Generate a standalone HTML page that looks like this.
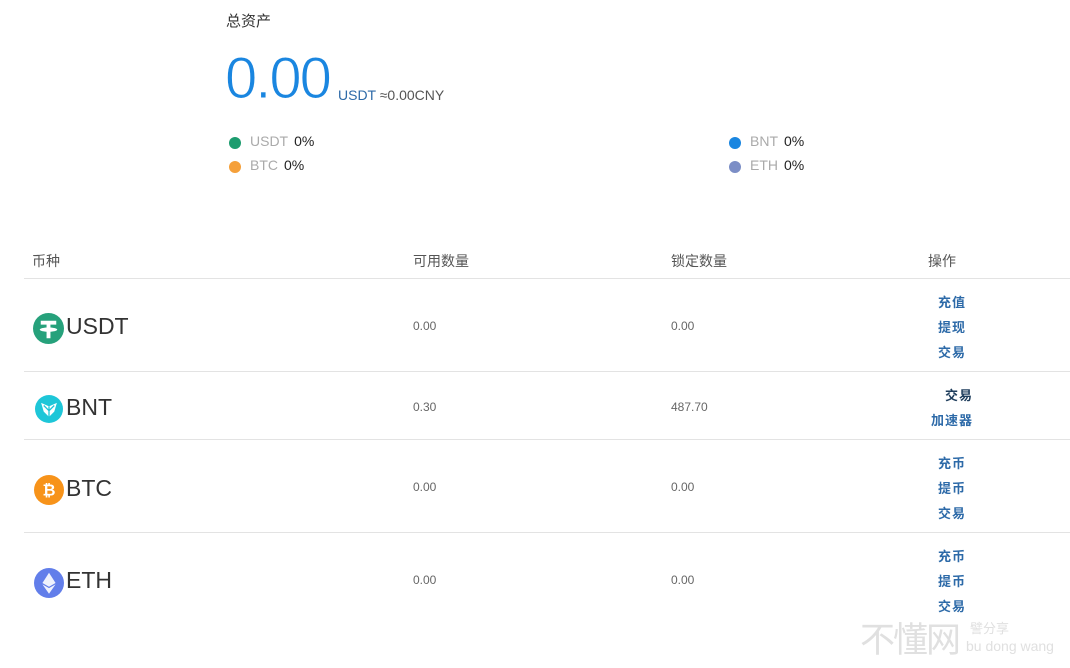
<!DOCTYPE html>
<html><head><meta charset="utf-8"><style>
*{margin:0;padding:0;box-sizing:border-box}
body{width:1070px;height:668px;background:#fff;font-family:"Liberation Sans","Noto Sans CJK SC",sans-serif;position:relative;overflow:hidden;color:#333}
.a{position:absolute;white-space:nowrap}
.dot{position:absolute;width:12px;height:12px;border-radius:50%}
.leg{font-size:14px;color:#aaa}
.leg b{font-weight:normal;color:#222;margin-left:6px}
.hd{font-size:14px;color:#555}
.line{position:absolute;left:24px;width:1046px;height:1px;background:#e3e3e3}
.num{font-size:12px;color:#666}
.coin{font-size:23px;color:#333}
.op{font-size:13px;color:#2d6aa8;font-weight:bold;letter-spacing:1px}
</style></head><body>
<div class="a" style="left:226px;top:10px;font-size:15px;color:#333">总资产</div>
<div class="a" style="left:225px;top:47px;font-size:58px;color:#1a86e0;line-height:64px;letter-spacing:-2px;-webkit-text-stroke:1px #fff">0.00</div>
<div class="a" style="left:338px;top:87px;font-size:14px;color:#2d6aa8">USDT <span style="color:#555">≈0.00CNY</span></div>

<div class="dot" style="left:229px;top:137px;background:#1d9c6f"></div>
<div class="a leg" style="left:250px;top:133px">USDT<b>0%</b></div>
<div class="dot" style="left:229px;top:161px;background:#f5a03a"></div>
<div class="a leg" style="left:250px;top:157px">BTC<b>0%</b></div>
<div class="dot" style="left:729px;top:137px;background:#1a86e0"></div>
<div class="a leg" style="left:750px;top:133px">BNT<b>0%</b></div>
<div class="dot" style="left:729px;top:161px;background:#7c8ec6"></div>
<div class="a leg" style="left:750px;top:157px">ETH<b>0%</b></div>

<div class="a hd" style="left:32px;top:251px">币种</div>
<div class="a hd" style="left:413px;top:251px">可用数量</div>
<div class="a hd" style="left:671px;top:251px">锁定数量</div>
<div class="a hd" style="left:928px;top:251px">操作</div>
<div class="line" style="top:278px"></div>
<div class="line" style="top:371px"></div>
<div class="line" style="top:439px"></div>
<div class="line" style="top:532px"></div>

<svg class="a" style="left:33px;top:313px" width="31" height="31" viewBox="0 0 32 32"><circle cx="16" cy="16" r="16" fill="#26a17b"/><path d="M8 8h16v4h-6v3c4 .3 7 1.2 7 2.2s-3 1.9-7 2.2V26h-4v-6.6c-4-.3-7-1.2-7-2.2s3-1.9 7-2.2V12H8z" fill="#fff"/></svg>
<div class="a coin" style="left:66px;top:313px">USDT</div>
<div class="a num" style="left:413px;top:319px">0.00</div>
<div class="a num" style="left:671px;top:319px">0.00</div>
<div class="a op" style="left:938px;top:292px">充值</div>
<div class="a op" style="left:938px;top:317px">提现</div>
<div class="a op" style="left:938px;top:342px">交易</div>

<svg class="a" style="left:35px;top:395px" width="28" height="28" viewBox="0 0 32 32"><circle cx="16" cy="16" r="16" fill="#1ec6d8"/><path d="M7 9l9 4 9-4-3 10-6 6-6-6z" fill="#fff"/><path d="M16 13v12M10 12l6 6 6-6" stroke="#1ec6d8" stroke-width="1.5" fill="none"/></svg>
<div class="a coin" style="left:66px;top:394px">BNT</div>
<div class="a num" style="left:413px;top:400px">0.30</div>
<div class="a num" style="left:671px;top:400px">487.70</div>
<div class="a op" style="left:945px;top:385px;color:#1e3d5c">交易</div>
<div class="a op" style="left:931px;top:410px">加速器</div>

<svg class="a" style="left:34px;top:475px" width="30" height="30" viewBox="0 0 32 32"><circle cx="16" cy="16" r="16" fill="#f7931a"/><text x="16" y="22" font-size="17" font-weight="bold" fill="#fff" text-anchor="middle" font-family="Liberation Sans">₿</text></svg>
<div class="a coin" style="left:66px;top:475px">BTC</div>
<div class="a num" style="left:413px;top:480px">0.00</div>
<div class="a num" style="left:671px;top:480px">0.00</div>
<div class="a op" style="left:938px;top:453px">充币</div>
<div class="a op" style="left:938px;top:478px">提币</div>
<div class="a op" style="left:938px;top:503px">交易</div>

<svg class="a" style="left:34px;top:568px" width="30" height="30" viewBox="0 0 32 32"><circle cx="16" cy="16" r="16" fill="#627eea"/><path d="M16 5l7 11-7 4-7-4z" fill="#fff" opacity=".9"/><path d="M16 21.5l7-4-7 10-7-10z" fill="#fff" opacity=".9"/></svg>
<div class="a coin" style="left:66px;top:567px">ETH</div>
<div class="a num" style="left:413px;top:573px">0.00</div>
<div class="a num" style="left:671px;top:573px">0.00</div>
<div class="a op" style="left:938px;top:546px">充币</div>
<div class="a op" style="left:938px;top:571px">提币</div>
<div class="a op" style="left:938px;top:596px">交易</div>

<div class="a" style="left:860px;top:612px;font-size:35px;color:#e0e0e0;letter-spacing:-2px">不懂网</div>
<div class="a" style="left:970px;top:618px;font-size:13px;color:#e0e0e0">譬分享</div>
<div class="a" style="left:966px;top:638px;font-size:14px;color:#e0e0e0">bu dong wang</div>
</body></html>
